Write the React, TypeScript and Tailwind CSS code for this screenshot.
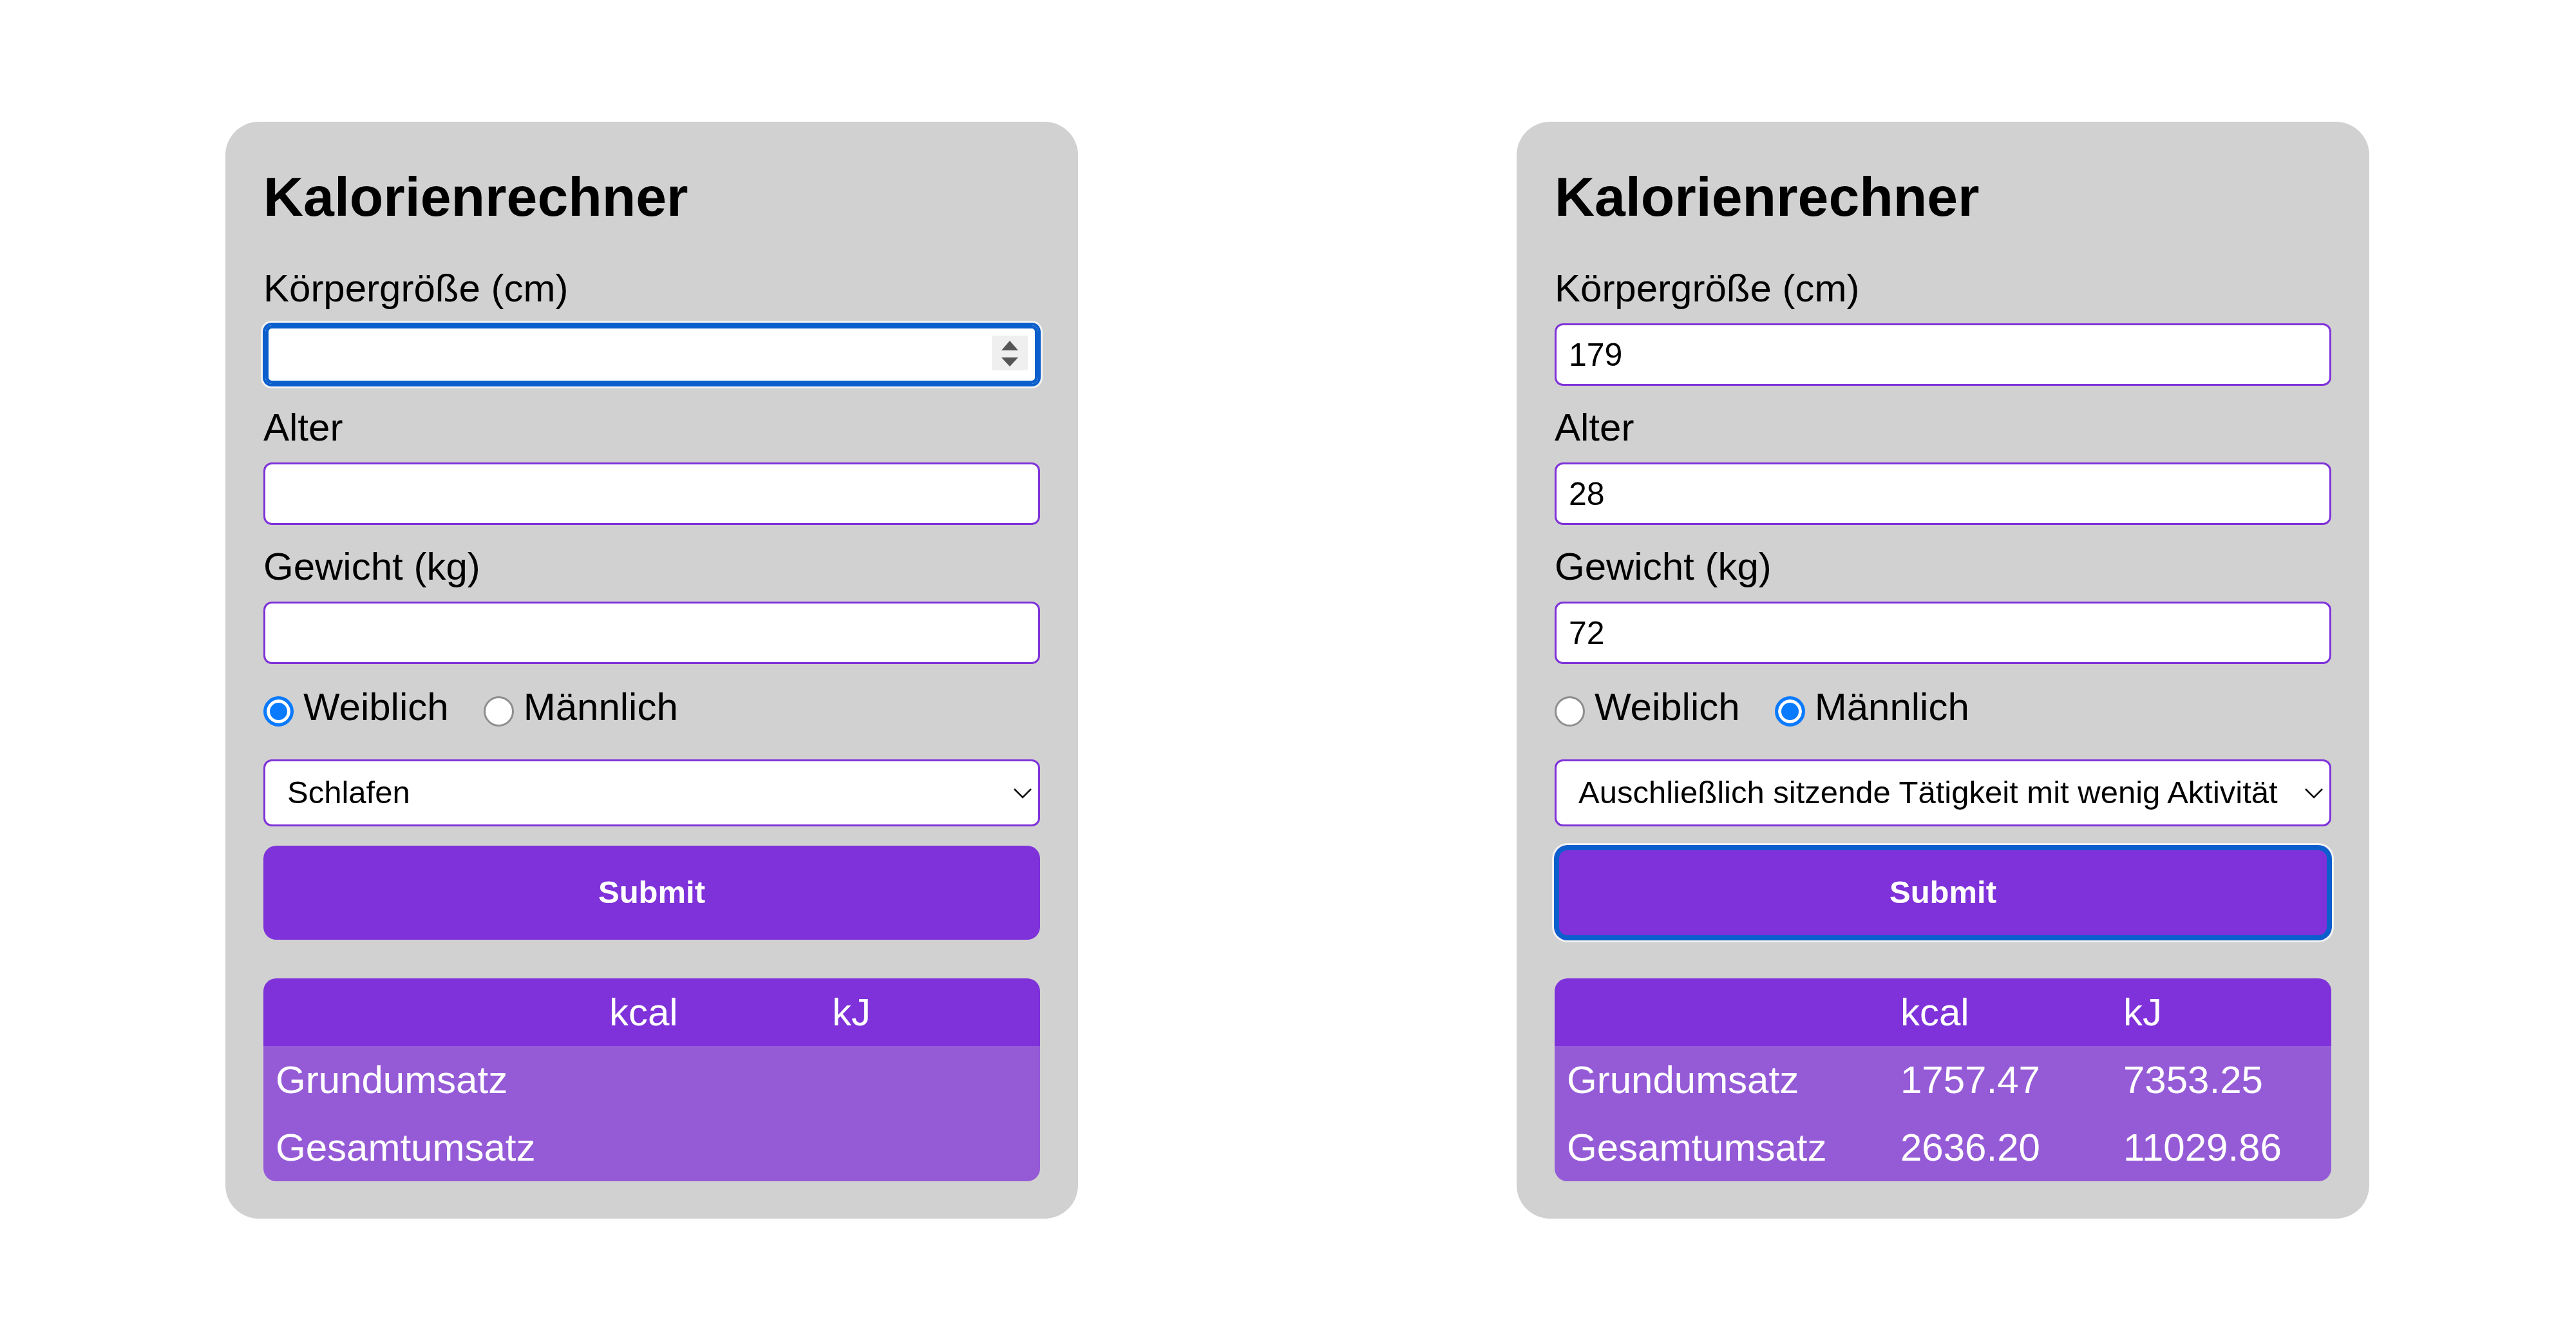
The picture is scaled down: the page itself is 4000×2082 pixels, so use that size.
import React from 'react'

type Result = { grund: [string, string]; gesamt: [string, string] }

type CardProps = {
  values: [string, string, string]
  focusedInput?: number
  gender: 'w' | 'm'
  activity: string
  submitFocused?: boolean
  result?: Result
}

const ACTIVITIES = [
  'Schlafen',
  'Auschließlich sitzende Tätigkeit mit wenig Aktivität',
  'Sitzende Tätigkeit mit gelegentlicher Bewegung',
  'Überwiegend stehende oder gehende Tätigkeit',
  'Körperlich anstrengende Arbeit',
]

const LABELS = ['Körpergröße (cm)', 'Alter', 'Gewicht (kg)']

function Field({ label, value, focused, first }: { label: string; value: string; focused: boolean; first: boolean }) {
  return (
    <div className={first ? 'mt-[58px]' : 'mt-[30px]'}>
      <label className="block h-[70px] text-[60px] leading-[70px] text-black">{label}</label>
      <div className="relative mt-[19px]">
        <input
          type="text"
          defaultValue={value}
          className={
            focused
              ? 'block h-[97px] w-full rounded-[13px] border-[3px] border-[#0b5fcc] bg-white px-[19px] text-[50px] text-black outline-none shadow-[inset_0_0_0_5px_#0b5fcc,0_0_0_1px_#0b5fcc,0_0_0_4px_#f2f2f2]'
              : 'block h-[97px] w-full rounded-[13px] border-[3px] border-[#7f32d9] bg-white px-[19px] text-[50px] text-black outline-none'
          }
        />
        {focused && (
          <svg className="pointer-events-none absolute right-[19px] top-[19px]" width="56" height="54" viewBox="0 0 56 54">
            <rect width="56" height="54" fill="#efefef" />
            <polygon points="15,23 28,8 41,23" fill="#555555" />
            <polygon points="15,34 41,34 28,48" fill="#555555" />
          </svg>
        )}
      </div>
    </div>
  )
}

function Radio({ checked, label, className }: { checked: boolean; label: string; className?: string }) {
  return (
    <label className={`flex items-start ${className ?? ''}`}>
      <input
        type="radio"
        name="gender"
        defaultChecked={checked}
        className={
          checked
            ? 'mt-[18px] h-[47px] w-[47px] appearance-none rounded-full border-[5px] border-[#0a7aff] bg-[#0a7aff] shadow-[inset_0_0_0_5px_#ffffff]'
            : 'mt-[18px] h-[47px] w-[47px] appearance-none rounded-full border-[3px] border-[#8e8e8e] bg-white'
        }
      />
      <span className="ml-[15px] text-[60px] leading-[70px] text-black">{label}</span>
    </label>
  )
}

function Card({ values, focusedInput, gender, activity, submitFocused, result }: CardProps) {
  return (
    <form className="w-[1324px] shrink-0 rounded-[52px] bg-[#d1d1d1] px-[59px] pt-[66px] pb-[58px]">
      <h1 className="text-[86px] font-bold leading-[100px] text-black">Kalorienrechner</h1>

      {LABELS.map((l, i) => (
        <Field key={l} label={l} value={values[i]} focused={focusedInput === i} first={i === 0} />
      ))}

      <fieldset className="mt-[32px] flex h-[70px]">
        <Radio checked={gender === 'w'} label="Weiblich" />
        <Radio checked={gender === 'm'} label="Männlich" className="ml-[54px]" />
      </fieldset>

      <div className="relative mt-[46px]">
        <select
          defaultValue={activity}
          className="block h-[104px] w-full appearance-none rounded-[13px] border-[3px] border-[#7f32d9] bg-white pl-[34px] pr-[60px] text-[49px] text-black outline-none"
        >
          {ACTIVITIES.map((a) => (
            <option key={a} value={a}>{a}</option>
          ))}
        </select>
        <svg className="pointer-events-none absolute right-[12px] top-[44px]" width="30" height="17" viewBox="0 0 30 17">
          <polyline points="2,2 15,15 28,2" fill="none" stroke="#111111" strokeWidth="2.6" />
        </svg>
      </div>

      <button
        type="button"
        className={
          submitFocused
            ? 'mt-[30px] block h-[146px] w-full rounded-[20px] bg-[#7f32d9] text-[49px] font-bold text-white outline-none shadow-[inset_0_0_0_7px_#0b5fcc,0_0_0_1px_#0b5fcc,0_0_0_4px_#f2f2f2]'
            : 'mt-[30px] block h-[146px] w-full rounded-[20px] bg-[#7f32d9] text-[49px] font-bold text-white outline-none'
        }
      >
        Submit
      </button>

      <div className="mt-[60px] grid grid-cols-[518px_346px_1fr] overflow-hidden rounded-[20px] text-[60px] leading-[105px] text-white">
        <div className="h-[105px] bg-[#7f32d9]" />
        <div className="h-[105px] bg-[#7f32d9] pl-[19px]">kcal</div>
        <div className="h-[105px] bg-[#7f32d9] pl-[19px]">kJ</div>

        <div className="h-[105px] bg-[#955bd7] pl-[19px]">Grundumsatz</div>
        <div className="h-[105px] bg-[#955bd7] pl-[19px]">{result?.grund[0]}</div>
        <div className="h-[105px] bg-[#955bd7] pl-[19px]">{result?.grund[1]}</div>

        <div className="h-[105px] bg-[#955bd7] pl-[19px]">Gesamtumsatz</div>
        <div className="h-[105px] bg-[#955bd7] pl-[19px]">{result?.gesamt[0]}</div>
        <div className="h-[105px] bg-[#955bd7] pl-[19px]">{result?.gesamt[1]}</div>
      </div>
    </form>
  )
}

export default function App() {
  return (
    <div className="flex min-h-[2082px] w-[4000px] items-start gap-[681px] bg-white pl-[350px] pt-[189px] font-['Liberation_Sans',Arial,sans-serif]">
      <Card values={['', '', '']} focusedInput={0} gender="w" activity="Schlafen" />
      <Card
        values={['179', '28', '72']}
        gender="m"
        activity="Auschließlich sitzende Tätigkeit mit wenig Aktivität"
        submitFocused
        result={{ grund: ['1757.47', '7353.25'], gesamt: ['2636.20', '11029.86'] }}
      />
    </div>
  )
}
